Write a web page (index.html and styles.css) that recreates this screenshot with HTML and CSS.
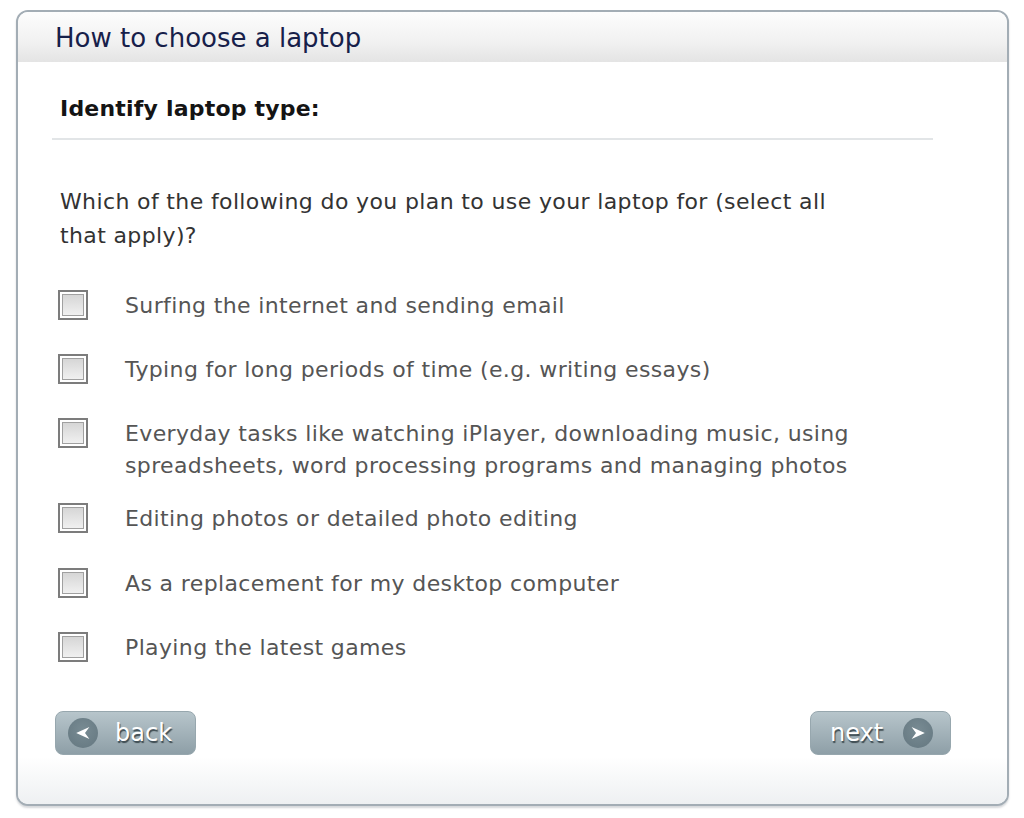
FILE: index.html
```html
<!DOCTYPE html>
<html>
<head>
<meta charset="utf-8">
<link rel="stylesheet" href="styles.css">
</head>
<body>
<div class="card">
  <div class="card-head">
    <h1 class="title">How to choose a laptop</h1>
  </div>
  <div class="card-body">
    <h2 class="step">Identify laptop type:</h2>
    <div class="divider"></div>
    <p class="question">Which of the following do you plan to use your laptop for (select all that apply)?</p>
    <ul class="options">
      <li class="option"><span class="box"></span><span class="label">Surfing the internet and sending email</span></li>
      <li class="option"><span class="box"></span><span class="label">Typing for long periods of time (e.g. writing essays)</span></li>
      <li class="option multi"><span class="box"></span><span class="label">Everyday tasks like watching iPlayer, downloading music, using spreadsheets, word processing programs and managing photos</span></li>
      <li class="option"><span class="box"></span><span class="label">Editing photos or detailed photo editing</span></li>
      <li class="option"><span class="box"></span><span class="label">As a replacement for my desktop computer</span></li>
      <li class="option"><span class="box"></span><span class="label">Playing the latest games</span></li>
    </ul>
    <div class="nav">
      <button class="btn back"><span class="circ"><svg class="arrow" width="20" height="20" viewBox="0 0 20 20"><path d="M18 2.5 L1.5 10 L18 17.5 L12.5 10 Z" fill="#ffffff"/></svg></span><span class="btn-text">back</span></button>
      <button class="btn next"><span class="btn-text">next</span><span class="circ"><svg class="arrow" width="20" height="20" viewBox="0 0 20 20"><path d="M2 2.5 L18.5 10 L2 17.5 L7.5 10 Z" fill="#ffffff"/></svg></span></button>
    </div>
  </div>
  <div class="card-foot"></div>
</div>
</body>
</html>
```

FILE: styles.css
```css
html, body {
  margin: 0;
  padding: 0;
  background: #fff;
}
body {
  font-family: "DejaVu Sans", Verdana, sans-serif;
  width: 1024px;
  height: 818px;
  overflow: hidden;
}
.card {
  margin: 10px 0 0 16px;
  width: 993px;
  height: 796px;
  box-sizing: border-box;
  border: 2px solid #a3adb5;
  border-radius: 12px;
  display: flex;
  flex-direction: column;
  overflow: hidden;
  background: #fff;
  box-shadow: 0 2px 2px rgba(90,100,110,0.25);
}
.card-head {
  height: 50px;
  flex: none;
  background: linear-gradient(#fdfdfd, #f1f1f1 60%, #e4e4e4);
  box-sizing: border-box;
  padding: 10px 0 0 37px;
}
.title {
  margin: 0;
  font-weight: normal;
  font-size: 26px;
  line-height: 32px;
  color: #17204a;
}
.card-body {
  flex: 1;
  padding: 0 0 0 34px;
}
.step {
  margin: 34px 0 0 8px;
  font-size: 22px;
  line-height: 26px;
  letter-spacing: 0.2px;
  font-weight: bold;
  color: #141414;
}
.divider {
  margin-top: 16px;
  width: 881px;
  height: 2px;
  background: #e2e5e7;
}
.question {
  margin: 45px 0 0 8px;
  width: 800px;
  font-size: 22px;
  letter-spacing: 0.37px;
  line-height: 34px;
  color: #333;
}
.options {
  list-style: none;
  margin: 37px 0 0 6px;
  padding: 0;
  display: flex;
  flex-direction: column;
}
.option {
  display: flex;
  align-items: flex-start;
  color: #555;
  font-size: 22px;
  letter-spacing: 0.37px;
  line-height: 32px;
  margin-bottom: 32px;
}
.option.multi {
  margin-bottom: 21px;
}
.option:nth-child(4) {
  margin-bottom: 33px;
}
.option:last-child {
  margin-bottom: 0;
}
.box {
  flex: none;
  width: 30px;
  height: 30px;
  box-sizing: border-box;
  border: 2px solid #7c7c7c;
  box-shadow: inset 0 0 0 2px #fff, inset 0 0 0 3px #a0a0a0;
  background: linear-gradient(#d2d2d2, #f4f4f4);
  margin-top: 0;
  margin-right: 37px;
}
.label {
  max-width: 760px;
}
.nav {
  display: flex;
  justify-content: space-between;
  width: 896px;
  margin-top: 47px;
  padding-left: 3px;
}
.btn {
  width: 141px;
  height: 44px;
  border: 1px solid #97a7ae;
  border-radius: 8px;
  background: linear-gradient(#b7c5cb, #8e9fa7);
  display: flex;
  align-items: center;
  padding: 0;
  font-family: "DejaVu Sans", Verdana, sans-serif;
  font-size: 24px;
  color: #fff;
  text-shadow: 1px 2px 1px #3c4a50;
  cursor: pointer;
}
.back { gap: 17px; padding-left: 12px; }
.next { gap: 20px; padding-left: 19px; }
.circ {
  width: 30px;
  height: 30px;
  border-radius: 50%;
  background: radial-gradient(circle at 50% 40%, #788b93, #647780);
  display: flex;
  align-items: center;
  justify-content: center;
  flex: none;
}
.arrow {
  width: 16px;
  height: 16px;
  display: block;
  flex: none;
}
.btn-text { line-height: 1; }
.card-foot {
  height: 47px;
  flex: none;
  background: linear-gradient(#fff, #eef0f2);
}
```
